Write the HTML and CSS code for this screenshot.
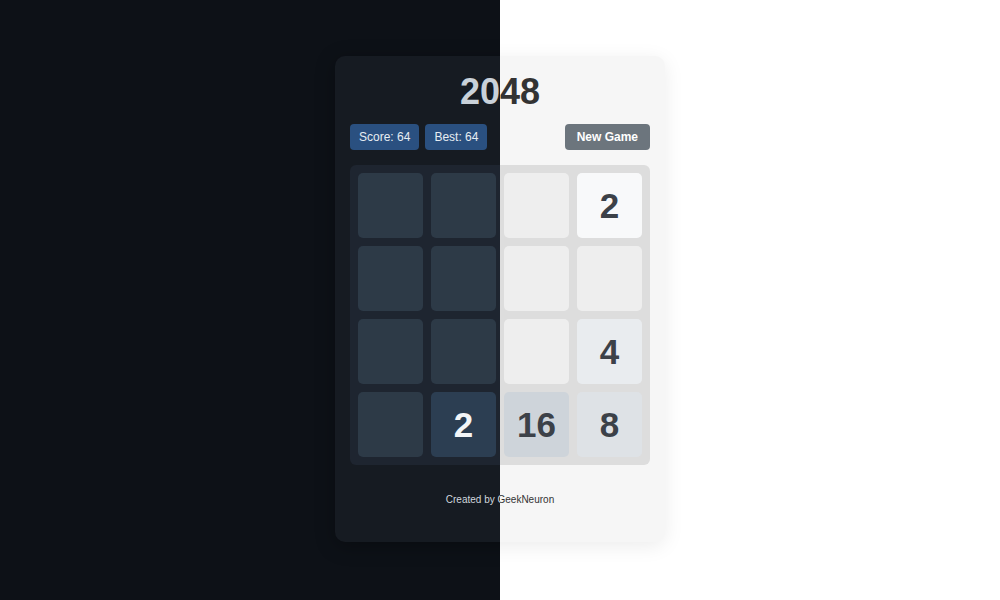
FILE: index.html
```html
<!DOCTYPE html>
<html lang="en">
<head>
<meta charset="utf-8">
<title>2048</title>
<link rel="stylesheet" href="styles.css">
</head>
<body>
<div class="stage">
  <div class="theme theme-light">
    <div class="card">
      <h1 class="title">2048</h1>
      <div class="controls">
        <span class="badge">Score: 64</span>
        <span class="badge">Best: 64</span>
        <button class="new-game">New Game</button>
      </div>
      <div class="board">
        <div class="cell"></div><div class="cell"></div><div class="cell"></div><div class="cell t2">2</div>
        <div class="cell"></div><div class="cell"></div><div class="cell"></div><div class="cell"></div>
        <div class="cell"></div><div class="cell"></div><div class="cell"></div><div class="cell t4">4</div>
        <div class="cell"></div><div class="cell t2">2</div><div class="cell t16">16</div><div class="cell t8">8</div>
      </div>
      <p class="footer">Created by GeekNeuron</p>
    </div>
  </div>
  <div class="theme theme-dark">
    <div class="card">
      <h1 class="title">2048</h1>
      <div class="controls">
        <span class="badge">Score: 64</span>
        <span class="badge">Best: 64</span>
        <button class="new-game">New Game</button>
      </div>
      <div class="board">
        <div class="cell"></div><div class="cell"></div><div class="cell"></div><div class="cell t2">2</div>
        <div class="cell"></div><div class="cell"></div><div class="cell"></div><div class="cell"></div>
        <div class="cell"></div><div class="cell"></div><div class="cell"></div><div class="cell t4">4</div>
        <div class="cell"></div><div class="cell t2">2</div><div class="cell t16">16</div><div class="cell t8">8</div>
      </div>
      <p class="footer">Created by GeekNeuron</p>
    </div>
  </div>
</div>
</body>
</html>
```
FILE: styles.css
```css
* { box-sizing: border-box; }

html, body {
  margin: 0;
  padding: 0;
  width: 100%;
  height: 100%;
  overflow: hidden;
}

body {
  font-family: "Liberation Sans", Arial, sans-serif;
}

.stage {
  display: grid;
  width: 100vw;
  height: 100vh;
}

.theme {
  grid-area: 1 / 1;
  display: flex;
  align-items: flex-start;
  justify-content: center;
  width: 100%;
  height: 100%;
  padding-top: 56px;
  background: var(--page);
}

.theme-light {
  --page: #ffffff;
  --card: #f6f6f6;
  --title: #333333;
  --board: #dddddd;
  --empty: #eeeeee;
  --tile-text: #3c4148;
  --t2: #f8f9fa;
  --t2-text: #3c4148;
  --t4: #e9ecef;
  --t8: #dee2e6;
  --t16: #ced4da;
  --footer: #333333;
  --shadow: 0 4px 20px rgba(0, 0, 0, 0.08);
}

.theme-dark {
  --page: #0d1117;
  --card: #161b22;
  --title: #c9d1d9;
  --board: #1e2530;
  --empty: #2d3a47;
  --tile-text: #f0f3f6;
  --t2: #2c3e52;
  --t2-text: #f3f5f7;
  --t4: #34495e;
  --t8: #3d5670;
  --t16: #466482;
  --footer: #d0d7de;
  --shadow: 0 4px 20px rgba(0, 0, 0, 0.3);
  clip-path: inset(0 50% 0 0);
}

.card {
  width: 330px;
  padding: 15px;
  background: var(--card);
  border-radius: 10px;
  box-shadow: var(--shadow);
}

.title {
  margin: 0 0 11px;
  font-size: 36px;
  line-height: 42px;
  font-weight: bold;
  text-align: center;
  color: var(--title);
}

.controls {
  display: flex;
  align-items: center;
  gap: 6px;
  height: 26px;
}

.badge {
  display: block;
  padding: 6px 9px;
  font-size: 12px;
  line-height: 14px;
  color: #e6edf3;
  background: #2a5080;
  border-radius: 4px;
}

.new-game {
  margin-left: auto;
  padding: 6px 12px;
  border: 0;
  font-family: inherit;
  font-size: 12px;
  line-height: 14px;
  font-weight: bold;
  color: #ffffff;
  background: #6c757d;
  border-radius: 4px;
}

.board {
  display: grid;
  grid-template-columns: repeat(4, 65px);
  grid-auto-rows: 65px;
  gap: 8px;
  margin-top: 15px;
  padding: 8px;
  background: var(--board);
  border-radius: 6px;
}

.cell {
  display: flex;
  align-items: center;
  justify-content: center;
  background: var(--empty);
  border-radius: 5px;
  font-size: 35px;
  font-weight: bold;
  color: var(--tile-text);
}

.t2 { background: var(--t2); color: var(--t2-text); }
.t4 { background: var(--t4); }
.t8 { background: var(--t8); }
.t16 { background: var(--t16); }

.footer {
  margin: 29px 0 21px;
  font-size: 10px;
  line-height: 12px;
  text-align: center;
  color: var(--footer);
}
```
